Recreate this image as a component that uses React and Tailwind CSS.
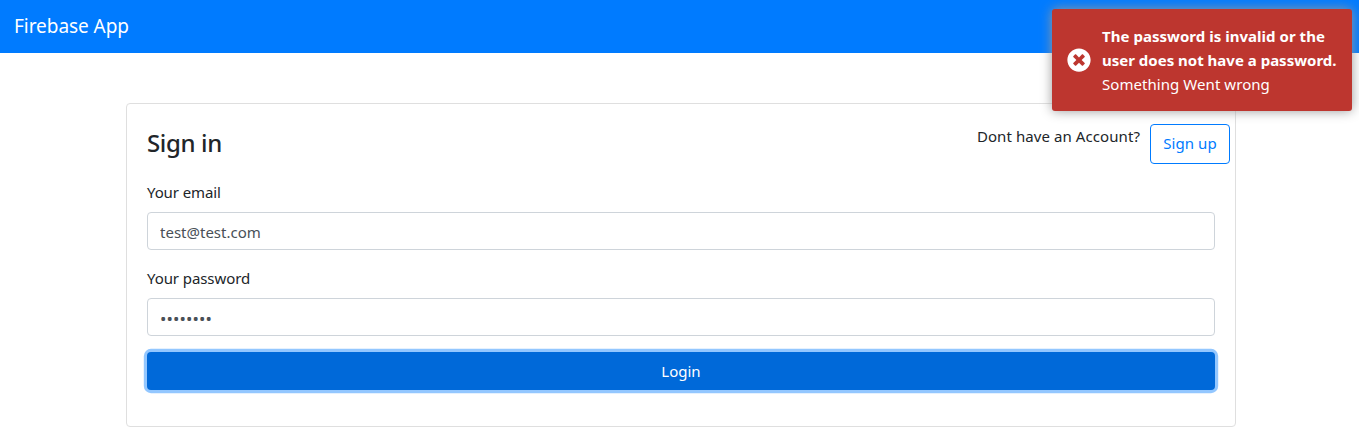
export default function App() {
  return (
    <div className="min-h-[447px] bg-white font-['Noto_Sans',sans-serif] text-[15px] leading-6 text-[#212529]">
      <nav className="flex h-[53px] items-center bg-[#007bff] px-3.5 pb-px text-[19px] tracking-[-0.05px] text-white">
        <span className="whitespace-nowrap">Firebase App</span>
      </nav>
      <main className="ml-[126px] mt-[50px] h-[324px] w-[1110px] rounded border border-[#dfdfdf]">
        <header className="flex h-[76px] justify-between pl-5 pr-[5px] pt-5">
          <h4 className="pt-[3px] text-[24px] font-medium leading-8 tracking-[-0.35px]">Sign in</h4>
          <div className="flex gap-2.5">
            <span className="tracking-[0.08px]">Dont have an Account?</span>
            <button className="flex h-10 w-20 items-center justify-center whitespace-nowrap rounded border border-[#007bff] pb-0.5 tracking-[0.08px] text-[#007bff]">Sign up</button>
          </div>
        </header>
        <form className="flex flex-col px-5">
          <label className="tracking-[-0.1px]">Your email</label>
          <input className="mt-2 h-[38px] rounded border border-[#ced4da] px-3 pt-0.5 text-[#495057] outline-none" defaultValue="test@test.com" />
          <label className="mt-4 tracking-[-0.08px]">Your password</label>
          <input type="password" className="mt-2 h-[38px] rounded border border-[#ced4da] px-3 pt-[3px] text-[17px] tracking-[0.1px] text-[#495057] outline-none" defaultValue="password" />
          <button type="button" className="mt-4 h-[38px] rounded bg-[#0069d9] text-white shadow-[0_0_0_3.2px_#93c7ff]">Login</button>
        </form>
      </main>
      <aside className="absolute right-[7px] top-[9px] flex h-[102px] w-[300px] items-center rounded-[3px] bg-[#bd362f] pl-[15px] text-white shadow-[0_0_12px_#999]">
        <svg className="mr-[11px] shrink-0" width="24" height="24" viewBox="0 0 512 512" fill="white"><path d="M256 8C119 8 8 119 8 256s111 248 248 248 248-111 248-248S393 8 256 8zm121.6 313.100c4.700 4.700 4.700 12.300 0 17L338 377.600c-4.700 4.700-12.300 4.700-17 0L256 312l-65.100 65.600c-4.700 4.700-12.300 4.700-17 0L134.400 338c-4.700-4.700-4.700-12.300 0-17l65.600-65-65.600-65.100c-4.700-4.700-4.700-12.300 0-17l39.600-39.600c4.700-4.700 12.300-4.700 17 0l65 65.700 65.100-65.600c4.700-4.700 12.300-4.700 17 0l39.600 39.600c4.700 4.700 4.700 12.300 0 17L312 256l65.600 65.100z"/></svg>
        <div className="whitespace-nowrap"><div className="font-bold tracking-[0.03px]">The password is invalid or the</div><div className="font-bold">user does not have a password.</div><div className="tracking-[0.06px]">Something Went wrong</div></div>
      </aside>
    </div>
  );
}
